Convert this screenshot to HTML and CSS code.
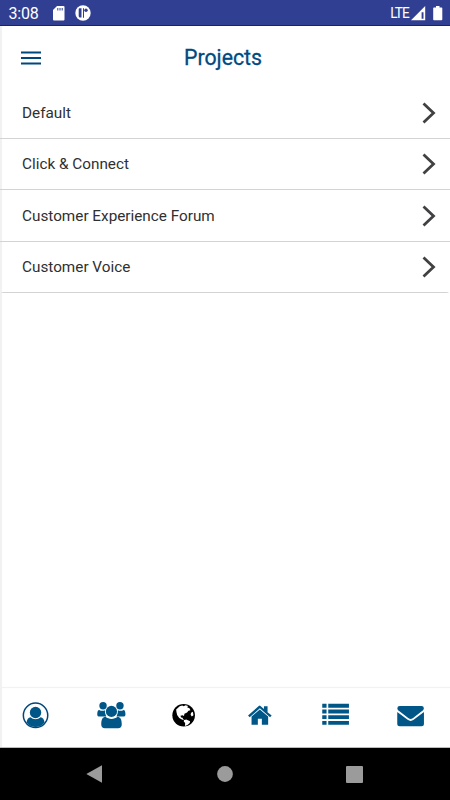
FILE: index.html
```html
<!DOCTYPE html>
<html lang="en">
<head>
<meta charset="utf-8">
<title>Projects</title>
<link rel="stylesheet" href="styles.css">
</head>
<body>
<div class="screen">
  <div class="status">
    <span class="clock">3:08</span>
    <svg class="sd" width="12" height="15" viewBox="0 0 12 15"><path fill="#fff" d="M4 0H10.500Q11.500 0 11.500 1V13.500Q11.500 14.500 10.500 14.500H1Q0 14.500 0 13.500V4Z"/><path stroke="#303f91" d="M4.800 2v2.500M7 2v2.500M9.200 2v2.500"/></svg>
    <svg class="app" width="16" height="16" viewBox="0 0 16 16"><circle cx="8" cy="8" r="7.700" fill="#fff"/><path fill="#303f91" d="M4.600 3.200H6.500V12.600H5.200Q3.700 12.600 3.700 11V4.200Q3.700 3.200 4.600 3.200ZM8 3.200H9V12.400L8 13Z"/><circle cx="11" cy="5.200" r="1.700" fill="#303f91"/></svg>
    <span class="lte">LTE</span>
    <svg class="signal" width="15" height="15" viewBox="0 0 15 15"><path fill="#fff" fill-rule="evenodd" d="M14.200 0V14.200H0ZM10.600 6.200V12.700H12.500V6.200Z"/></svg>
    <svg class="battery" width="10" height="15" viewBox="0 0 10 15"><path fill="#fff" d="M3 0H6.500V1.500H8.500Q9.300 1.500 9.300 2.500V13.500Q9.300 14.300 8.500 14.300H1Q.2 14.300 .2 13.500V2.500Q.2 1.500 1 1.500H3Z"/></svg>
  </div>
  <main class="content">
    <header class="header">
      <svg class="menu" width="20" height="14" viewBox="0 0 20 14"><path stroke="#00477c" stroke-width="2" d="M0 1.500H20M0 7H20M0 12.500H20"/></svg>
      <h1>Projects</h1>
    </header>
    <ul class="list">
      <li><span>Default</span><svg width="14" height="22" viewBox="0 0 14 22"><path d="M1.500 1.500L11.500 11L1.500 20.500"/></svg></li>
      <li><span>Click &amp; Connect</span><svg width="14" height="22" viewBox="0 0 14 22"><path d="M1.500 1.500L11.500 11L1.500 20.500"/></svg></li>
      <li><span>Customer Experience Forum</span><svg width="14" height="22" viewBox="0 0 14 22"><path d="M1.500 1.500L11.500 11L1.500 20.500"/></svg></li>
      <li><span>Customer Voice</span><svg width="14" height="22" viewBox="0 0 14 22"><path d="M1.500 1.500L11.500 11L1.500 20.500"/></svg></li>
    </ul>
  </main>
  <nav class="tabs">
    <svg viewBox="0 0 28 28"><circle cx="13.300" cy="13.300" r="12.200" fill="none" stroke="#00457c" stroke-width="1.500"/><circle cx="13.300" cy="10.500" r="5.700"/><path d="M4.300 20.500C4.700 17.500 6 15.500 8.300 15.300C11 17.800 15.500 17.800 18.300 15.300C20.600 15.500 22 17.500 22.300 20.500C17.800 26.600 8.800 26.600 4.300 20.500Z"/></svg>
    <svg viewBox="0 0 28 28"><circle cx="5.800" cy="3.800" r="3.700"/><circle cx="22.700" cy="3.800" r="3.700"/><path d="M2 8C4 9.200 6 9 7.600 8.300Q7.400 11.500 9 14.600H2.800Q0 14.600 0 12.400C0 10 .5 8 2 8ZM26.300 8C24.300 9.200 22.300 9 20.700 8.300Q20.900 11.500 19.300 14.600H25.500Q28.200 14.600 28.200 12.400C28.200 10 27.700 8 26.300 8Z"/><circle cx="14.200" cy="9.400" r="5.600"/><path d="M8.300 14.800C11.500 17.600 17 17.600 20.200 14.800C23.500 15 24.500 18 24.500 22.500Q24.500 26.200 20.800 26.200H7.700Q4 26.200 4 22.500C4 18 5 15 8.300 14.800Z"/></svg>
    <svg viewBox="0 0 28 28"><circle cx="11.400" cy="13.300" r="11.300" fill="#000"/><path fill="#fff" d="M3.900 7.600L7.500 4.200L10 3.500L11.500 4.300L13.300 3.300L15.800 4L14.900 5.200L17.200 6.300L18.200 8.200L16.200 8.700L14.800 10.500L12.200 11.800L11.700 14L10.300 13.200L8.200 13.700L8.800 15.500L10.400 15.700L10.800 17.300L12.300 18L14 17.600L17.800 19.200L17.500 20.900L15.200 23L12.700 24L12.900 21L11.500 19.500L11.800 18.200L9.700 17.600L7 15.900L4.900 13L4.200 10Z"/><path fill="#fff" d="M18.800 10.700L20.600 9.700L21.200 13.200L19.500 14.400L18.400 12.800Z"/></svg>
    <svg viewBox="0 0 28 28"><path d="M12.600 3.400L16.700 7V4.300H20.300V10.200L24.400 13.500L22.800 15.200L12.600 6.300L2.400 15.200L.8 13.500L11.500 4.100Q12.100 3.500 12.600 3.400Z"/><path d="M12.600 7.400L20.900 14.600V22.700H14.600V16.800H10.600V22.700H4.300V14.600Z"/></svg>
    <svg viewBox="0 0 28 28"><path d="M0 1.800H4.300V5.800H0ZM6 1.800H26.700V5.800H6ZM0 7.600H4.300V11.400H0ZM6 7.600H26.700V11.400H6ZM0 13.200H4.300V17.100H0ZM6 13.200H26.700V17.100H6ZM0 18.900H4.300V22.800H0ZM6 18.900H26.700V22.800H6Z"/></svg>
    <svg viewBox="0 0 28 28"><path d="M2.500 4H24.300Q26.600 4 26.600 6.300C26.600 7.500 26 8.300 24.800 9.100L15.500 16.200Q13.400 17.700 11.300 16.200L1.900 9.100C.7 8.300 .1 7.500 .1 6.300Q.1 4 2.500 4ZM0 10L10.400 17.800Q13.400 20 16.400 17.800L26.700 10V21.800Q26.700 24.300 24.200 24.300H2.500Q0 24.300 0 21.800Z"/></svg>
  </nav>
  <div class="system">
    <svg width="17" height="18" viewBox="0 0 17 18"><path d="M16 .3V17.700L.3 9Z"/></svg>
    <svg width="16" height="16" viewBox="0 0 16 16"><circle cx="8" cy="8" r="7.900"/></svg>
    <svg width="17" height="17" viewBox="0 0 17 17"><rect width="17" height="17" rx="1"/></svg>
  </div>
</div>
</body>
</html>
```
FILE: styles.css
```css
* { box-sizing: border-box; }
body { margin: 0; font-family: Roboto, "Liberation Sans", sans-serif; }
svg { display: block; flex: none; }
.screen { width: 450px; height: 800px; display: flex; flex-direction: column; background: #fff; overflow: hidden; }
.status { height: 26px; flex: none; display: flex; align-items: center; padding: 0 8px 0 8.500px; background: #303f91; border-bottom: 1px solid #15217c; color: #fff; }
.clock { width: 44px; font-size: 16px; line-height: 24px; padding-top: 2px; letter-spacing: -0.200px; }
.sd { margin-top: 1px; }
.app { margin-left: 10px; margin-top: 1px; }
.lte { margin-left: auto; font-size: 14.500px; line-height: 24px; letter-spacing: -1px; padding-top: 2px; transform: scaleX(0.940); transform-origin: right; }
.signal { margin: 1px 7px 0 2px; }
.battery { margin-top: 1px; margin-right: -1px; }
.content { flex: 1; box-shadow: inset 2px 0 1px #f1f1f1; }
.header { height: 61px; position: relative; display: flex; align-items: center; justify-content: center; padding-top: 3px; }
.menu { position: absolute; left: 21px; top: 25px; }
h1 { margin: 0 4px 0 0; font-size: 21.300px; font-weight: 400; line-height: 26px; color: #004a80; letter-spacing: 0; -webkit-text-stroke: 0.300px #004a80; }
.list { margin: 0; padding: 0; list-style: none; border-radius: 0 0 4px 4px; overflow: hidden; }
.list li { height: 51.500px; display: flex; align-items: center; justify-content: space-between; padding: 1.200px 14px 0 22px; border-bottom: 1px solid #d2d4d4; font-size: 15.300px; letter-spacing: 0; color: #303030; }
.list path { fill: none; stroke: #414144; stroke-width: 2.800; }
.tabs { height: 61px; flex: none; display: grid; grid-template-columns: repeat(6, 75px); border-top: 1px solid #f2f2f2; border-bottom: 1px solid #bbb; padding-top: 14px; box-shadow: inset 2px 0 1px #f1f1f1; }
.tabs svg { width: 28.500px; height: 28px; margin-left: 22px; fill: #005687; }
.system { height: 52px; flex: none; display: flex; align-items: center; justify-content: space-between; padding: 0 87px 0 86px; background: #000; }
.system svg { fill: #9b9b9b; }
```
